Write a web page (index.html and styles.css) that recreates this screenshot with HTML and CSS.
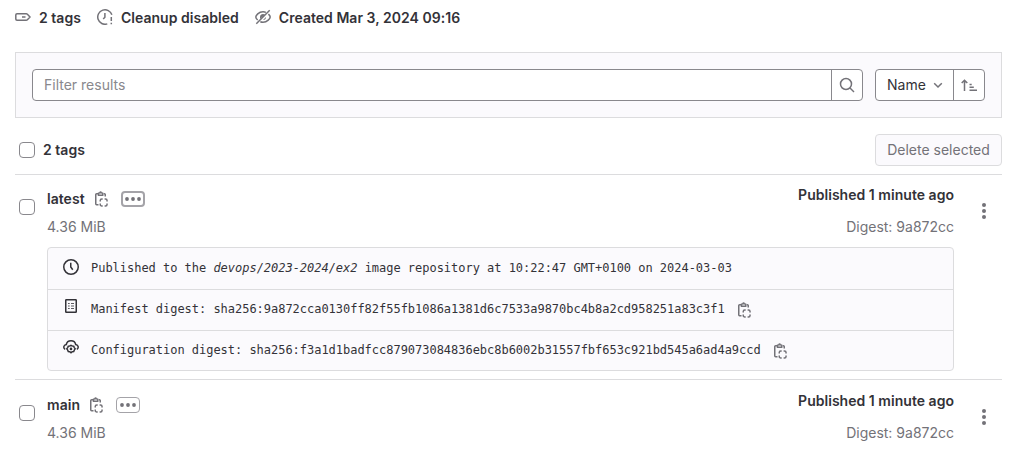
FILE: index.html
```
<!DOCTYPE html>
<html lang="en">
<head>
<meta charset="utf-8">
<title>Container registry tags</title>
<link rel="stylesheet" href="styles.css">
</head>
<body>
<svg class="sprite" aria-hidden="true">
  <symbol id="label" viewBox="0 0 16 16"><path d="M2 4.750h9.200c.5 0 .9.200 1.200.5L15 8l-2.600 2.700c-.3.300-.7.500-1.200.5H2c-.7 0-1.200-.5-1.200-1.200V6c0-.7.500-1.250 1.200-1.250zM7 8h3.500"/></symbol>
  <symbol id="expire" viewBox="0 0 16 16"><path d="M10.300 14.900A7.250 7.250 0 1 1 14.900 5.800M7.900 4v4.200L6.200 10M14.300 8v4M14.300 13.700v1.600"/></symbol>
  <symbol id="eye-slash" viewBox="0 0 16 16"><path d="M1.300 14.700 14.700 1.300M2.700 11C1.500 10 .8 8.800.8 8c0-1.400 2.800-5.250 7.200-5.250 1.100 0 2 .2 2.900.6M13.400 5.100C14.600 6.200 15.200 7.400 15.200 8c0 1.400-2.800 5.250-7.200 5.250-1 0-1.900-.2-2.700-.5"/><path class="solid" d="M5 10V8a3 3 0 0 1 5-2.300zM8 11a3 3 0 0 0 3-3z"/></symbol>
  <symbol id="search" viewBox="0 0 16 16"><circle cx="7" cy="7" r="5.500"/><path d="m11 11 4 4"/></symbol>
  <symbol id="chevron" viewBox="0 0 16 16"><path d="m4.200 6.250 3.800 3.800 3.800-3.800"/></symbol>
  <symbol id="sort" viewBox="0 0 16 16"><path d="M3.500 14V3.200M.7 6 3.500 3.200 6.300 6M8.500 7.500h2.200M8.500 10.300h4.300M8.500 13.200H16"/></symbol>
  <symbol id="copy" viewBox="0 0 16 16"><path d="M5 2.750H3.600c-.5 0-.85.350-.85.850v9.200c0 .5.350.950.850.950H5.500M10.800 2.750h.6c.5 0 .85.350.85.850V5.500M5.500 4.250v-2L7 1.750C7.200.6 8 .6 8.200 1.750l1.500.5v2zM7.250 10.500V9.600c0-.9.650-1.550 1.550-1.550h.9M11.600 8.050h.9c.9 0 1.550.650 1.550 1.550v.9M14.050 12.500v.9c0 .9-.650 1.550-1.550 1.550h-.9M9.700 14.950h-.9c-.9 0-1.550-.650-1.550-1.550v-.9"/></symbol>
  <symbol id="clock" viewBox="0 0 16 16"><circle cx="8" cy="8" r="7.250"/><path d="M7.750 3.750V8l2 2.700"/></symbol>
  <symbol id="log" viewBox="0 0 16 16"><rect x="2.750" y="1.750" width="10.500" height="12.500" rx=".6"/><path class="thin" d="M5 5.500h1.700M8 5.500h3M5 8h1.700M8 8h3M5 10.500h1.700M8 10.500h3"/></symbol>
  <symbol id="cloud-gear" viewBox="0 0 16 16"><path d="M2.200 10.300C0 9.200.4 6 3.300 5.500 4.300.6 11.700.6 12.700 5.500c2.900.5 3.300 3.700 1.100 4.800"/><path d="m8 6.300 1.200.7 1.500.1.600 1.500.9 1.200-.9 1.300-.6 1.400-1.500.2L8 13.800l-1.200-1.100-1.500-.2-.6-1.400-.9-1.300.9-1.200.6-1.500 1.500-.1z"/><circle class="solid" cx="8" cy="9.900" r="1.300"/></symbol>
  <symbol id="dots" viewBox="0 0 16 16"><g class="solid"><circle cx="2" cy="8" r="1.900"/><circle cx="8" cy="8" r="1.900"/><circle cx="14" cy="8" r="1.900"/></g></symbol>
  <symbol id="kebab" viewBox="0 0 16 16"><g class="solid"><circle cx="8" cy="2" r="2"/><circle cx="8" cy="8" r="2"/><circle cx="8" cy="14" r="2"/></g></symbol>
</svg>
<main class="page">
  <header class="meta">
    <span class="meta-item"><svg class="icon"><use href="#label"/></svg>2 tags</span>
    <span class="meta-item"><svg class="icon"><use href="#expire"/></svg>Cleanup disabled</span>
    <span class="meta-item"><svg class="icon"><use href="#eye-slash"/></svg>Created Mar 3, 2024 09:16</span>
  </header>
  <section class="filters">
    <div class="group search">
      <span class="placeholder">Filter results</span>
      <span class="segment"><svg class="icon"><use href="#search"/></svg></span>
    </div>
    <div class="group sorting">
      <span class="sort-name">Name<svg class="icon"><use href="#chevron"/></svg></span>
      <span class="segment"><svg class="icon"><use href="#sort"/></svg></span>
    </div>
  </section>
  <section class="list-head">
    <span class="checkbox"></span><strong>2 tags</strong>
    <span class="delete">Delete selected</span>
  </section>
  <article class="tag">
    <span class="checkbox"></span>
    <div class="tag-main">
      <div class="tag-top">
        <div>
          <div class="name"><strong>latest</strong><svg class="icon"><use href="#copy"/></svg><span class="more focused"><svg><use href="#dots"/></svg></span></div>
          <div class="muted">4.36 MiB</div>
        </div>
        <div class="published"><strong>Published 1 minute ago</strong><div class="muted">Digest: 9a872cc</div></div>
      </div>
      <div class="details">
        <div class="detail"><svg class="icon dark"><use href="#clock"/></svg><span class="mono">Published to the <i>devops/2023-2024/ex2</i> image repository at 10:22:47 GMT+0100 on 2024-03-03</span></div>
        <div class="detail"><svg class="icon dark raised"><use href="#log"/></svg><span class="mono">Manifest digest: sha256:9a872cca0130ff82f55fb1086a1381d6c7533a9870bc4b8a2cd958251a83c3f1</span><svg class="icon copy"><use href="#copy"/></svg></div>
        <div class="detail"><svg class="icon dark raised"><use href="#cloud-gear"/></svg><span class="mono">Configuration digest: sha256:f3a1d1badfcc879073084836ebc8b6002b31557fbf653c921bd545a6ad4a9ccd</span><svg class="icon copy"><use href="#copy"/></svg></div>
      </div>
    </div>
    <svg class="icon kebab"><use href="#kebab"/></svg>
  </article>
  <article class="tag compact">
    <span class="checkbox"></span>
    <div class="tag-main">
      <div class="tag-top">
        <div>
          <div class="name"><strong>main</strong><svg class="icon"><use href="#copy"/></svg><span class="more"><svg><use href="#dots"/></svg></span></div>
          <div class="muted">4.36 MiB</div>
        </div>
        <div class="published"><strong>Published 1 minute ago</strong><div class="muted">Digest: 9a872cc</div></div>
      </div>
    </div>
    <svg class="icon kebab"><use href="#kebab"/></svg>
  </article>
</main>
</body>
</html>
```
FILE: styles.css
```
* { box-sizing: border-box; }
body {
  margin: 0;
  height: 453px;
  overflow: hidden;
  background: #fff;
  color: #333238;
  font: 14px/20px Inter, "Liberation Sans", sans-serif;
}
strong { font-weight: 600; letter-spacing: 0.03px; }
.sprite { display: none; }
.page { padding: 8px 16px 0 15px; }
.icon {
  width: 16px;
  height: 16px;
  flex: none;
  display: block;
  fill: none;
  color: #737278;
  stroke: currentColor;
  stroke-width: 1.5;
}
.solid { fill: currentColor; stroke: none; }
.thin { stroke-width: 1.2; opacity: 0.8; }
.dark { color: #333238; }
.meta { display: flex; gap: 16px; height: 20px; font-weight: 600; letter-spacing: 0.03px; }
.meta-item { display: flex; align-items: center; gap: 8px; white-space: nowrap; }
.meta-item .icon { margin-top: -2px; }
.filters {
  display: flex;
  gap: 12px;
  height: 66px;
  margin-top: 24px;
  padding: 16px;
  background: #fbfafd;
  border: 1px solid #dcdcde;
}
.group {
  display: flex;
  height: 32px;
  background: #fff;
  border: 1px solid #89888d;
  border-radius: 4px;
}
.search { flex: 1; }
.placeholder { flex: 1; padding: 5px 11px; color: #89888d; }
.segment {
  display: flex;
  align-items: center;
  justify-content: center;
  width: 31px;
  border-left: 1px solid #89888d;
}
.sorting { width: 110px; }
.sort-name { display: flex; flex: 1; align-items: center; gap: 4px; padding-left: 11px; }
.list-head { display: flex; align-items: center; height: 56px; padding: 8px 0 0 4px; }
.list-head strong { margin-left: 8px; }
.checkbox {
  flex: none;
  width: 16px;
  height: 16px;
  border: 1px solid #89888d;
  border-radius: 4px;
  background: #fff;
}
.delete {
  display: flex;
  align-items: center;
  justify-content: center;
  width: 127px;
  height: 32px;
  margin-left: auto;
  color: #737278;
  background: #fbfafd;
  border: 1px solid #dcdcde;
  border-radius: 4px;
}
.tag {
  display: flex;
  align-items: flex-start;
  padding: 0 10px 8px 4px;
  border-top: 1px solid #dcdcde;
}
.compact { padding-top: 1px; }
.tag > .checkbox { margin-top: 24px; }
.tag-main { flex: 1; margin-left: 12px; }
.tag-top { display: flex; justify-content: space-between; height: 72px; }
.name { display: flex; align-items: center; height: 20px; margin-top: 14px; }
.name .icon { margin-left: 8px; }
.muted { margin-top: 8px; color: #737278; }
.more {
  display: flex;
  align-items: center;
  justify-content: center;
  width: 24px;
  height: 16px;
  margin-left: 12px;
  background: #fff;
  border: 1px solid #a4a3a8;
  border-radius: 4px;
}
.more.focused { border-width: 2px; }
.more svg { width: 16px; height: 16px; flex: none; color: #737278; }
.published { padding-top: 10px; text-align: right; }
.published strong { display: block; }
.published .muted { margin-top: 12px; }
.kebab { margin: 28px 0 0 22px; }
.details {
  height: 124px;
  background: #fbfafd;
  border: 1px solid #dcdcde;
  border-radius: 4px;
}
.detail { display: flex; align-items: center; height: 41px; padding: 0 15px 2px; }
.detail + .detail { border-top: 1px solid #dcdcde; }
.detail:first-child .icon { margin-top: -2px; }
.raised { margin-top: -6px; }
.mono {
  margin-left: 12px;
  font: 12px/20px "DejaVu Sans Mono", "Liberation Mono", monospace;
  letter-spacing: -0.024px;
  white-space: pre;
}
.copy { margin: 2px 0 0 11px; }
```
